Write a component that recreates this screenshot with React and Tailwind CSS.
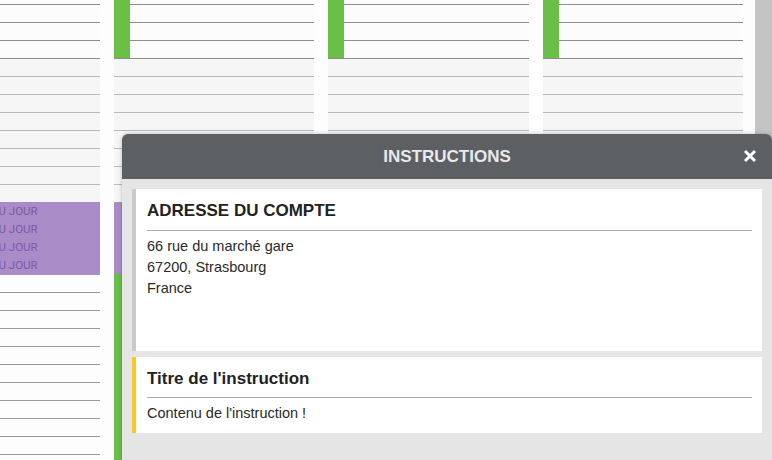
import React from "react";

const ROWS = 27;

function Column({ width, variant, children }) {
  const rows = [];
  for (let i = 0; i < ROWS; i++) {
    let cls;
    if (i < 4) cls = "bg-[#fcfcfc] border-[#8d8d8d]";
    else if (variant === "first" && i >= 16) cls = "bg-[#fdfdfd] border-[#9a9a9a]";
    else cls = "bg-[#f6f6f6] border-[#b9b9b9]";
    rows.push(<div key={i} className={`h-[18px] shrink-0 border-b ${cls}`} />);
  }
  return (
    <div className={`relative h-full shrink-0 overflow-hidden ${width}`}>
      <div className="flex flex-col mt-[-13px]">{rows}</div>
      {children}
    </div>
  );
}

export default function App() {
  return (
    <div
      className="relative w-[772px] h-[460px] overflow-hidden bg-[#fcfcfc]"
      style={{ fontFamily: '"Liberation Sans", Arial, sans-serif' }}
    >
      {/* calendar background */}
      <div className="flex h-full">
        <Column width="w-[100px]" variant="first">
          <div className="absolute left-0 right-0 top-[202px] h-[73px] bg-[#a98cc7] flex flex-col pt-0">
            {[0, 1, 2, 3].map((i) => (
              <div
                key={i}
                className="h-[18px] leading-[18px] text-[11.5px] text-[#7b5ba3] ml-[-9px] whitespace-nowrap"
                style={{ fontFamily: 'Roboto, "Liberation Sans", sans-serif' }}
              >
                DU JOUR
              </div>
            ))}
          </div>
        </Column>
        <div className="w-[14px] shrink-0 bg-[#fdfdfd]" />
        <Column width="w-[200px]">
          <div className="absolute left-0 top-0 w-[16px] h-[58px] bg-[#6bbf47]" />
          <div className="absolute left-0 top-[202px] w-[16px] h-[72px] bg-[#a98cc7]" />
          <div className="absolute left-0 top-[274px] w-[16px] bottom-0 bg-[#6bbf47]" />
        </Column>
        <div className="w-[14px] shrink-0 bg-[#fdfdfd]" />
        <Column width="w-[201px]">
          <div className="absolute left-0 top-0 w-[16px] h-[58px] bg-[#6bbf47]" />
        </Column>
        <div className="w-[14px] shrink-0 bg-[#fdfdfd]" />
        <Column width="w-[200px]">
          <div className="absolute left-0 top-0 w-[16px] h-[58px] bg-[#6bbf47]" />
        </Column>
        <div className="w-[12px] shrink-0 bg-[#fdfdfd]" />
        <div className="w-[17px] shrink-0 bg-[#c4c4c4]" />
      </div>

      {/* modal */}
      <div className="absolute left-[122px] top-[134px] w-[650px] bottom-0 flex flex-col rounded-t-[6px] overflow-hidden bg-[#e4e5e4] shadow-[0_0_4px_rgba(0,0,0,0.25)]">
        <div className="relative h-[45px] shrink-0 bg-[#5d6062] flex items-center justify-center">
          <span className="text-[17px] font-bold text-[#e9e9e9]">INSTRUCTIONS</span>
          <svg
            className="absolute right-[15px] top-[15px]"
            width="14"
            height="14"
            viewBox="0 0 14 14"
          >
            <path d="M2 2 L12 12 M12 2 L2 12" stroke="#ffffff" strokeWidth="3" strokeLinecap="butt" />
          </svg>
        </div>
        <div className="flex flex-col gap-[6px] px-[10px] pt-[10px]">
          <div className="h-[162px] bg-white border-l-[4px] border-[#c9c9c9] pl-[11px] pr-[10px] pt-[12px]">
            <div className="text-[17px] leading-[20px] font-bold text-[#222] pb-[9px] border-b border-[#ababab]">
              ADRESSE DU COMPTE
            </div>
            <div className="pt-[5px] text-[14.5px] leading-[21px] text-[#2a2a2a]">
              <div>66 rue du marché gare</div>
              <div>67200, Strasbourg</div>
              <div>France</div>
            </div>
          </div>
          <div className="h-[76px] bg-white border-l-[4px] border-[#f6c926] pl-[11px] pr-[10px] pt-[12px]">
            <div className="text-[17px] leading-[20px] font-bold text-[#222] pb-[8px] border-b border-[#ababab]">
              Titre de l'instruction
            </div>
            <div className="pt-[5px] text-[14.5px] leading-[21px] text-[#2a2a2a]">
              Contenu de l'instruction !
            </div>
          </div>
        </div>
      </div>
    </div>
  );
}
